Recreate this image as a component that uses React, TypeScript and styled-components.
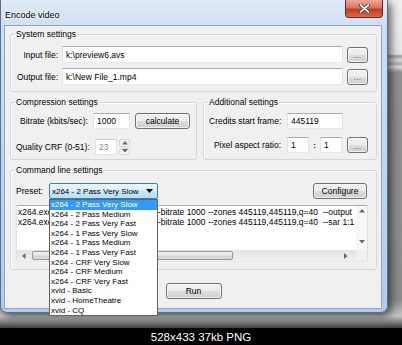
import React from 'react';
import styled, { createGlobalStyle } from 'styled-components';

const GlobalStyle = createGlobalStyle`
  html, body {
    margin: 0;
    padding: 0;
    background: #000;
  }
  body {
    font-family: 'Liberation Sans', Arial, sans-serif;
    color: #000;
  }
`;

const Screen = styled.div`
  width: 402px;
  height: 345px;
  display: flex;
  flex-direction: column;
  overflow: hidden;
`;

const Stage = styled.div`
  height: 328px;
  flex: none;
  background: linear-gradient(
    to bottom,
    #eeeeee 0,
    #e6e6e6 54px,
    #9d9d9d 56px,
    #d6d6d6 60px,
    #a9a9a9 64px,
    #dcdcdc 67px,
    #8f8f8f 72px,
    #8b8b8b 300px,
    #c4c4c4 316px,
    #3c3c3c 328px
  );
`;

const Caption = styled.div`
  flex: 1;
  background: #000;
  color: #fff;
  font-size: 11.5px;
  display: flex;
  align-items: center;
  justify-content: center;
`;

const Window = styled.div`
  width: 388px;
  height: 313px;
  box-sizing: border-box;
  display: flex;
  flex-direction: column;
  border: 1px solid #5a6f8c;
  border-top: none;
  border-radius: 0 0 7px 7px;
  padding: 0 5px 3px 3px;
  background: linear-gradient(to bottom, #dfeaf6 0, #cfdff1 26px, #c0d5ed 55%, #b2cbe8 100%);
  box-shadow: 3px 3px 8px rgba(0, 0, 0, 0.6);
`;

const TitleBar = styled.div`
  height: 25px;
  flex: none;
  display: flex;
  justify-content: space-between;
  align-items: flex-start;
`;

const Title = styled.span`
  margin: 10px 0 0 1px;
  font-size: 9px;
  line-height: 10px;
  text-shadow: 0 0 5px #fff, 0 0 3px #fff;
`;

const CloseButton = styled.div`
  width: 38px;
  height: 18px;
  margin-right: -1px;
  box-sizing: border-box;
  border: 1px solid #6b2a1e;
  border-top: none;
  border-radius: 0 0 4px 4px;
  background: linear-gradient(to bottom, #e9a99b 0, #d8765f 45%, #c33c22 55%, #d56a4c 100%);
  display: flex;
  align-items: center;
  justify-content: center;
`;

const Client = styled.div`
  flex: 1;
  display: flex;
  flex-direction: column;
  background: #f0f0f0;
  border: 1px solid #8fa5c0;
  padding: 3px 4px 0 5px;
  font-size: 8.5px;
`;

const Group = styled.fieldset<{ $pad: string }>`
  margin: 0;
  min-width: 0;
  box-sizing: border-box;
  border: 1px solid #d2d9de;
  border-radius: 3px;
  box-shadow: inset 1px 1px 0 #fff;
  padding: ${p => p.$pad};
`;

const Legend = styled.legend`
  padding: 0 1px;
  margin-left: -1px;
  line-height: 10px;
  font-size: 8.5px;
`;

const FileGrid = styled.div`
  display: grid;
  grid-template-columns: 42px 1fr 21px;
  column-gap: 4px;
  row-gap: 5px;
  align-items: center;
`;

const Label = styled.span`
  text-align: right;
  white-space: nowrap;
  line-height: 10px;
`;

const TextBox = styled.div<{ $w?: number; $h?: number; $disabled?: boolean }>`
  width: ${p => (p.$w ? `${p.$w}px` : 'auto')};
  height: ${p => p.$h ?? 16}px;
  box-sizing: border-box;
  background: #fff;
  border: 1px solid #e2e3ea;
  border-top-color: ${p => (p.$disabled ? '#c7cacc' : '#abadb3')};
  border-bottom-color: #e3e9ef;
  padding-left: 3px;
  display: flex;
  align-items: center;
  white-space: nowrap;
  overflow: hidden;
  color: ${p => (p.$disabled ? '#8d8d8d' : '#000')};
`;

const Button = styled.div<{ $w: number; $h?: number }>`
  width: ${p => p.$w}px;
  height: ${p => p.$h ?? 16}px;
  box-sizing: border-box;
  border: 1px solid #707070;
  border-radius: 3px;
  background: linear-gradient(to bottom, #f2f2f2 0, #ebebeb 48%, #dddddd 52%, #cfcfcf 100%);
  box-shadow: inset 0 0 0 1px rgba(255, 255, 255, 0.7);
  display: flex;
  align-items: center;
  justify-content: center;
  flex: none;
  white-space: nowrap;
`;

const PickButton = styled(Button)`
  margin-left: 5px;
`;

const Dots = styled.span`
  font-size: 8px;
  letter-spacing: 0.5px;
  margin-top: 2px;
  color: #333;
`;

const SettingsRow = styled.div`
  display: flex;
  gap: 6px;
  margin-top: 5px;
`;

const SideGroup = styled(Group)<{ $basis?: number }>`
  flex: ${p => (p.$basis ? `0 0 ${p.$basis}px` : '1')};
`;

const FormGrid = styled.div<{ $rowGap: number }>`
  display: grid;
  grid-template-columns: 72px auto;
  column-gap: 5px;
  row-gap: ${p => p.$rowGap}px;
  align-items: center;
`;

const Field = styled.div<{ $gap?: number; $shift?: number }>`
  display: flex;
  align-items: center;
  gap: ${p => p.$gap ?? 5}px;
  margin-left: ${p => p.$shift ?? 0}px;
`;

const Colon = styled.span`
  width: 11px;
  text-align: center;
  font-weight: bold;
  font-size: 8px;
`;

const Spinner = styled.div`
  width: 11px;
  height: 16px;
  display: flex;
  flex-direction: column;
  gap: 1px;
`;

const SpinHalf = styled.div`
  flex: 1;
  border: 1px solid #d4d6d8;
  border-radius: 2px;
  background: #f4f4f4;
  display: flex;
  align-items: center;
  justify-content: center;
`;

const CmdGroup = styled(Group)`
  margin-top: 5px;
`;

const PresetRow = styled.div`
  display: flex;
  align-items: center;
  gap: 6px;
  padding-right: 1px;
`;

const ComboWrap = styled.div`
  position: relative;
  margin-right: auto;
`;

const Combo = styled.div`
  width: 109px;
  height: 16px;
  box-sizing: border-box;
  border: 1px solid #3c7fb1;
  border-radius: 2px;
  background: linear-gradient(to bottom, #edf7fd 0, #dcf0fc 50%, #c6e8fc 52%, #b4def7 100%);
  display: flex;
  align-items: center;
  justify-content: space-between;
  padding: 0 4px 0 2px;
  white-space: nowrap;
  font-size: 8px;
`;

const DropList = styled.ul`
  position: absolute;
  top: 100%;
  left: 0;
  z-index: 10;
  width: 109px;
  box-sizing: border-box;
  margin: 0;
  padding: 0;
  list-style: none;
  background: #fff;
  border: 1px solid #646464;
`;

const DropItem = styled.li<{ $active?: boolean }>`
  height: 9.6px;
  line-height: 9.6px;
  font-size: 8px;
  padding-left: 1px;
  white-space: nowrap;
  background: ${p => (p.$active ? '#3399ff' : 'transparent')};
  color: ${p => (p.$active ? '#fff' : '#000')};
`;

const CmdBox = styled.div`
  margin-top: 6px;
  height: 57px;
  box-sizing: border-box;
  border: 1px solid #abadb3;
  border-bottom-color: #e3e9ef;
  border-left-color: #e2e3ea;
  border-right-color: #dbdfe6;
  background: #fff;
  display: grid;
  grid-template-columns: 1fr 11px;
  grid-template-rows: 1fr 11px;
`;

const CmdText = styled.div`
  padding: 2px 0 0 1px;
  white-space: pre;
  overflow: hidden;
  line-height: 9.5px;
  font-size: 8.5px;
`;

const VScroll = styled.div`
  background: #f7f7f7;
  display: flex;
  flex-direction: column;
  justify-content: space-between;
  align-items: center;
  padding: 3px 0 6px;
`;

const HScroll = styled.div`
  background: linear-gradient(to bottom, #e3e3e3, #f0f0f0);
  display: flex;
  align-items: center;
  padding: 0 8px 0 5px;
`;

const Thumb = styled.div`
  width: 201px;
  height: 9px;
  margin-left: 6px;
  margin-right: auto;
  box-sizing: border-box;
  border: 1px solid #979797;
  border-radius: 2px;
  background: linear-gradient(to bottom, #f3f3f3, #e2e2e2 50%, #d3d3d3 51%, #dadada);
`;

const Corner = styled.div`
  background: #f0f0f0;
`;

const RunButton = styled(Button)`
  margin-top: 13px;
  align-self: center;
`;

const Tri = ({ dir }: { dir: 'up' | 'down' | 'left' | 'right' }) => {
  const d = {
    up: 'M0 3.5 L3 0 L6 3.5 Z',
    down: 'M0 0 L6 0 L3 3.5 Z',
    left: 'M3.5 0 L3.5 6 L0 3 Z',
    right: 'M0 0 L0 6 L3.5 3 Z',
  }[dir];
  const vertical = dir === 'up' || dir === 'down';
  return (
    <svg width={vertical ? 6 : 4} height={vertical ? 4 : 6} viewBox={vertical ? '0 0 6 4' : '0 0 4 6'}>
      <path d={d} fill="#6a6a6a" />
    </svg>
  );
};

const presets = [
  'x264 - 2 Pass Very Slow',
  'x264 - 2 Pass Medium',
  'x264 - 2 Pass Very Fast',
  'x264 - 1 Pass Very Slow',
  'x264 - 1 Pass Medium',
  'x264 - 1 Pass Very Fast',
  'x264 - CRF Very Slow',
  'x264 - CRF Medium',
  'x264 - CRF Very Fast',
  'xvid - Basic',
  'xvid - HomeTheatre',
  'xvid - CQ',
];

export default function App() {
  return (
    <>
      <GlobalStyle />
      <Screen>
        <Stage>
          <Window>
            <TitleBar>
              <Title>Encode video</Title>
              <CloseButton>
                <svg width="11" height="9" viewBox="0 0 11 9">
                  <path d="M1.5 1 L9.5 8 M9.5 1 L1.5 8" stroke="#5a1a10" strokeWidth="3.2" strokeLinecap="round" />
                  <path d="M1.5 1 L9.5 8 M9.5 1 L1.5 8" stroke="#fff" strokeWidth="1.8" strokeLinecap="round" />
                </svg>
              </CloseButton>
            </TitleBar>

            <Client>
              <Group $pad="7px 8px 6px 5px">
                <Legend>System settings</Legend>
                <FileGrid>
                  <Label>Input file:</Label>
                  <TextBox $h={17}>k:\preview6.avs</TextBox>
                  <Button $w={21}><Dots>...</Dots></Button>
                  <Label>Output file:</Label>
                  <TextBox $h={17}>k:\New File_1.mp4</TextBox>
                  <Button $w={21}><Dots>...</Dots></Button>
                </FileGrid>
              </Group>

              <SettingsRow>
                <SideGroup $basis={187} $pad="6px 6px 4px 5px">
                  <Legend>Compression settings</Legend>
                  <FormGrid $rowGap={10}>
                    <Label>Bitrate (kbits/sec):</Label>
                    <Field>
                      <TextBox $w={37}>1000</TextBox>
                      <Button $w={55}>calculate</Button>
                    </Field>
                    <Label>Quality CRF (0-51):</Label>
                    <Field $gap={2} $shift={2}>
                      <TextBox $w={22} $disabled>23</TextBox>
                      <Spinner>
                        <SpinHalf><Tri dir="up" /></SpinHalf>
                        <SpinHalf><Tri dir="down" /></SpinHalf>
                      </Spinner>
                    </Field>
                  </FormGrid>
                </SideGroup>

                <SideGroup $pad="6px 8px 6px 5px">
                  <Legend>Additional settings</Legend>
                  <FormGrid $rowGap={8}>
                    <Label>Credits start frame:</Label>
                    <Field $shift={1}>
                      <TextBox $w={56}>445119</TextBox>
                    </Field>
                    <Label>Pixel aspect ratio:</Label>
                    <Field $gap={0} $shift={1}>
                      <TextBox $w={22}>1</TextBox>
                      <Colon>:</Colon>
                      <TextBox $w={22}>1</TextBox>
                      <PickButton $w={21}><Dots>...</Dots></PickButton>
                    </Field>
                  </FormGrid>
                </SideGroup>
              </SettingsRow>

              <CmdGroup $pad="8px 8px 7px 5px">
                <Legend>Command line settings</Legend>
                <PresetRow>
                  <Label>Preset:</Label>
                  <ComboWrap>
                    <Combo>
                      <span>x264 - 2 Pass Very Slow</span>
                      <svg width="7" height="4" viewBox="0 0 7 4">
                        <path d="M0 0 H7 L3.5 4 Z" fill="#000" />
                      </svg>
                    </Combo>
                    <DropList>
                      {presets.map((p, i) => (
                        <DropItem key={p} $active={i === 0}>{p}</DropItem>
                      ))}
                    </DropList>
                  </ComboWrap>
                  <Button $w={54}>Configure</Button>
                </PresetRow>
                <CmdBox>
                  <CmdText>
                    {'x264.exe --pass 1 --preset veryslow --bitrate 1000 --zones 445119,445119,q=40  --output\n'}
                    {'x264.exe --pass 2 --preset veryslow --bitrate 1000 --zones 445119,445119,q=40  --sar 1:1'}
                  </CmdText>
                  <VScroll>
                    <Tri dir="up" />
                    <Tri dir="down" />
                  </VScroll>
                  <HScroll>
                    <Tri dir="left" />
                    <Thumb />
                    <Tri dir="right" />
                  </HScroll>
                  <Corner />
                </CmdBox>
              </CmdGroup>

              <RunButton $w={56}>Run</RunButton>
            </Client>
          </Window>
        </Stage>
        <Caption>528x433 37kb PNG</Caption>
      </Screen>
    </>
  );
}
